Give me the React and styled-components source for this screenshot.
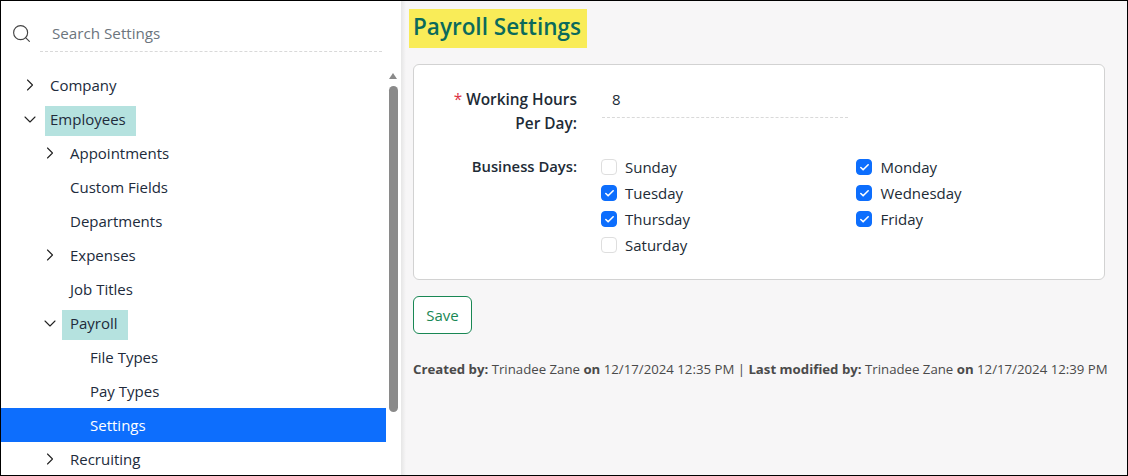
import React from 'react'
import styled, { createGlobalStyle } from 'styled-components'
import { Search, ChevronRight, ChevronDown, Check } from 'lucide-react'

const GlobalStyle = createGlobalStyle`
  html, body {
    margin: 0;
    padding: 0;
    background: #fff;
  }
  body {
    font-family: 'Open Sans', 'Noto Sans', sans-serif;
    color: #212b36;
  }
  * {
    box-sizing: border-box;
  }
`

const Frame = styled.div`
  display: flex;
  width: 1128px;
  height: 476px;
  border: 1px solid #000;
  overflow: hidden;
`

const Sidebar = styled.aside`
  display: flex;
  flex-direction: column;
  flex: 0 0 400px;
  height: 100%;
  background: #fff;
`

const SearchBar = styled.div`
  display: flex;
  align-items: center;
  flex: 0 0 51px;
  padding-left: 10px;
  color: #444;

  svg {
    margin-top: 13px;
  }
`

const SearchBox = styled.div`
  display: flex;
  align-items: center;
  width: 342px;
  height: 51px;
  margin-left: 8px;
  padding: 13px 0 0 12px;
  border-bottom: 1px dashed #d9d9d9;
  font-size: 15.2px;
  color: #6c757d;
`

const TreeArea = styled.div`
  display: flex;
  flex: 1;
  min-height: 0;
  padding-top: 16px;
`

const TreeList = styled.ul`
  flex: 0 0 385px;
  margin: 0;
  padding: 0;
  list-style: none;
`

const Row = styled.li`
  display: flex;
  align-items: center;
  height: 34px;
  padding-left: ${p => 19 + p.$level * 20}px;
  font-size: 15px;
  background: ${p => (p.$selected ? '#0d6efd' : 'transparent')};
  color: ${p => (p.$selected ? '#fff' : '#212b3b')};
`

const Toggle = styled.span`
  display: flex;
  align-items: center;
  justify-content: center;
  flex: 0 0 20px;
  min-width: 0;
  height: 20px;
  color: #222;
`

const NodeLabel = styled.span`
  display: flex;
  align-items: center;
  height: 30px;
  margin: ${p => (p.$level ? 3 : 4)}px 0 0 ${p => (p.$level ? 2 : 5)}px;
  padding: 0 ${p => (p.$open ? 10 : 0)}px ${p => (p.$level ? 2 : 4)}px ${p => (p.$level ? 8 : 5)}px;
  line-height: 1;
  background: ${p => (p.$open ? '#b5e2df' : 'transparent')};
`

const Scrollbar = styled.div`
  display: flex;
  flex-direction: column;
  align-items: center;
  flex: 0 0 15px;
  padding: 5px 1px 0 0;
`

const ScrollArrow = styled.span`
  width: 0;
  height: 0;
  border-left: 4.5px solid transparent;
  border-right: 4.5px solid transparent;
  border-bottom: 6px solid #8a8a8a;
`

const ScrollThumb = styled.span`
  width: 9px;
  height: 326px;
  margin-top: 7px;
  border-radius: 5px;
  background: #8a8a8a;
`

const Main = styled.main`
  flex: 1;
  min-width: 0;
  padding: 8px 0 0 12px;
  background: linear-gradient(to right, #e6e6e6 0, #f7f6f7 5px);
`

const Title = styled.h1`
  display: inline-block;
  height: 39px;
  margin: 0 0 16px -4px;
  padding: 0 6px 0 4px;
  font-size: 22.5px;
  font-weight: 600;
  line-height: 36px;
  color: #0b6a5c;
  background: #f9ec58;
`

const Card = styled.section`
  display: grid;
  grid-template-columns: 163px 1fr;
  column-gap: 25px;
  align-content: start;
  width: 692px;
  height: 216px;
  padding: 22px 0 0 0;
  background: #fff;
  border: 1px solid #d2d2d2;
  border-radius: 6px;
`

const FieldLabel = styled.label`
  margin-top: 1px;
  padding-left: 30px;
  font-size: ${p => p.$size || 14.8}px;
  font-weight: 600;
  line-height: 24px;
  text-align: right;
`

const Required = styled.span`
  margin-right: 4px;
  font-weight: 400;
  color: #dc3545;
`

const HoursInput = styled.div`
  width: 246px;
  height: 31px;
  padding: 0 0 0 10px;
  border-bottom: 1px dashed #d9d9d9;
  font-size: 15px;
  line-height: 24px;
`

const Days = styled.div`
  display: grid;
  grid-template-columns: 255.4px 1fr;
  grid-auto-rows: 26px;
  grid-column: 2;
  margin-left: -1px;
`

const DaysLabel = styled(FieldLabel)`
  margin-top: 18px;
`

const DaysWrap = styled.div`
  margin-top: 18px;
`

const Day = styled.div`
  display: flex;
  align-items: center;
  gap: 8px;
  font-size: 15px;
`

const Box = styled.span`
  display: flex;
  align-items: center;
  justify-content: center;
  width: 16px;
  height: 16px;
  border-radius: 4px;
  border: 1px solid ${p => (p.$checked ? '#0d6efd' : '#dedede')};
  background: ${p => (p.$checked ? '#0d6efd' : '#fff')};
  color: #fff;
`

const SaveButton = styled.button`
  display: block;
  width: 59px;
  height: 38px;
  margin-top: 16px;
  padding: 0;
  font-family: inherit;
  font-size: 15px;
  color: #198754;
  background: #fff;
  border: 1px solid #198754;
  border-radius: 6px;
`

const Footer = styled.p`
  margin: 26px 0 0;
  font-size: 13.22px;
  line-height: 18px;
  white-space: nowrap;
  color: #4a4a4a;
`

const tree = [
  { label: 'Company', level: 0, toggle: 'closed' },
  { label: 'Employees', level: 0, toggle: 'open' },
  { label: 'Appointments', level: 1, toggle: 'closed' },
  { label: 'Custom Fields', level: 1 },
  { label: 'Departments', level: 1 },
  { label: 'Expenses', level: 1, toggle: 'closed' },
  { label: 'Job Titles', level: 1 },
  { label: 'Payroll', level: 1, toggle: 'open' },
  { label: 'File Types', level: 2 },
  { label: 'Pay Types', level: 2 },
  { label: 'Settings', level: 2, selected: true },
  { label: 'Recruiting', level: 1, toggle: 'closed' },
]

const days = [
  ['Sunday', false],
  ['Monday', true],
  ['Tuesday', true],
  ['Wednesday', true],
  ['Thursday', true],
  ['Friday', true],
  ['Saturday', false],
]

const App = () => {
  return (
    <Frame>
      <GlobalStyle />
      <Sidebar>
        <SearchBar>
          <Search size={21} strokeWidth={1.3} />
          <SearchBox>Search Settings</SearchBox>
        </SearchBar>
        <TreeArea>
          <TreeList>
            {tree.map(node => (
              <Row key={node.label} $level={node.level} $selected={node.selected}>
                <Toggle>
                  {node.toggle === 'closed' && <ChevronRight size={20} strokeWidth={1.3} />}
                  {node.toggle === 'open' && <ChevronDown size={21} strokeWidth={1.3} />}
                </Toggle>
                <NodeLabel $open={node.toggle === 'open'} $level={node.level}>
                  {node.label}
                </NodeLabel>
              </Row>
            ))}
          </TreeList>
          <Scrollbar>
            <ScrollArrow />
            <ScrollThumb />
          </Scrollbar>
        </TreeArea>
      </Sidebar>
      <Main>
        <Title>Payroll Settings</Title>
        <Card>
          <FieldLabel $size={15.4}>
            <Required>*</Required>Working Hours Per Day:
          </FieldLabel>
          <HoursInput>8</HoursInput>
          <DaysLabel>Business Days:</DaysLabel>
          <DaysWrap>
            <Days>
              {days.map(([name, checked]) => (
                <Day key={name}>
                  <Box $checked={checked}>{checked && <Check size={11} strokeWidth={3.5} />}</Box>
                  {name}
                </Day>
              ))}
            </Days>
          </DaysWrap>
        </Card>
        <SaveButton>Save</SaveButton>
        <Footer>
          <b>Created by:</b> Trinadee Zane <b>on</b> 12/17/2024 12:35 PM | <b>Last modified by:</b> Trinadee Zane <b>on</b> 12/17/2024 12:39 PM
        </Footer>
      </Main>
    </Frame>
  )
}

export default App
